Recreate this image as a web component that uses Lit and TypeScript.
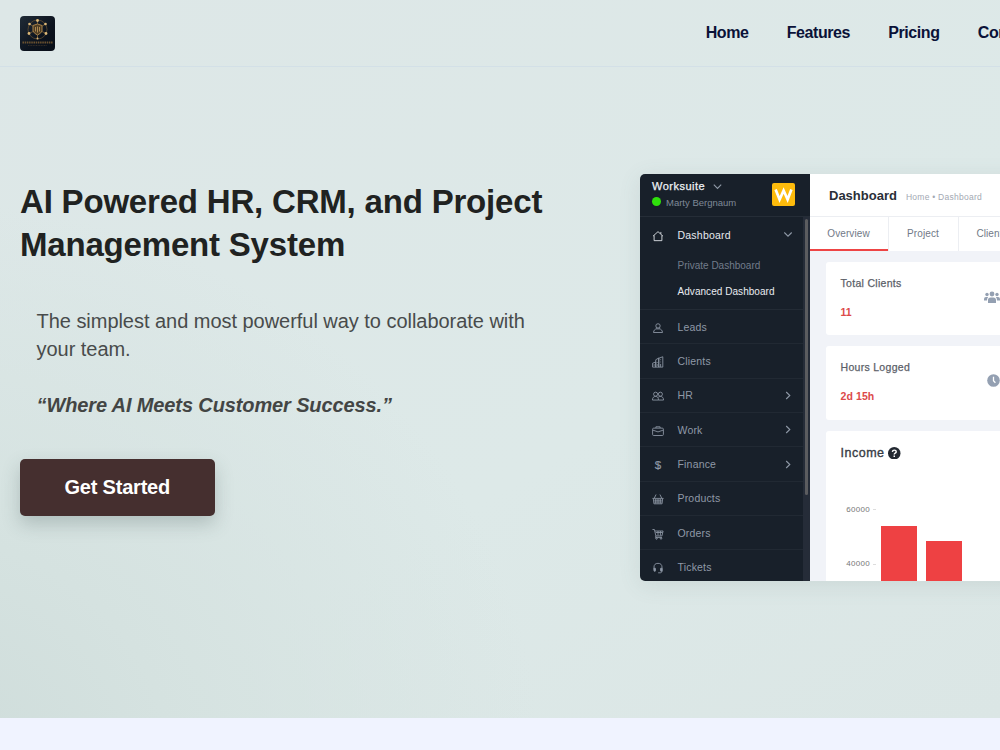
import { LitElement, html, css, svg } from "lit";
import { customElement } from "lit/decorators.js";

const menuIcons: Record<string, unknown> = {
  home: svg`<path d="M1.400 8.200 8 2.200l6.600 6M2.800 7.200v7h10.400v-7M11.800 2.600v2.600"/>`,
  leads: svg`<circle cx="8" cy="5.2" r="2.9"/><path d="M5.800 7.400 6.400 9M10.200 7.400 9.600 9M2 14c.2-3 2.200-4.800 4.200-4.800h3.600c2 0 4 1.800 4.200 4.800z"/>`,
  clients: svg`<path d="M.8 14.800V9.600L5 8v6.800M5 14.800V5l4-2.400v12.200M9 14.800V3l5.400-2v13.800H.8M2.800 11v2M11.500 4.500v1M11.500 7.500v1M11.500 10.500v4M7 8v1M7 11v2"/>`,
  hr: svg`<circle cx="4.800" cy="5.600" r="2.700"/><circle cx="11.200" cy="5.600" r="2.700"/><path d="M.6 13.400c0-3.400 1.800-4.800 4.200-4.800s3.800 1.400 3.800 4.800zM8.400 9.600c.8-.8 1.700-1 2.800-1 2.200 0 4.200 1.400 4.200 4.800H8.600"/>`,
  work: svg`<rect x=".8" y="4.200" width="14.400" height="9.800" rx="1.400"/><path d="M5.200 4V2.400h5.600V4M1 6.800l7 2.400 7-2.400"/>`,
  basket: svg`<path d="M.6 7.200h14.800M1.800 7.600l.8 6.800h10.800l.8-6.800M3 7 5.400 2M13 7l-2.400-5M3 9.600h10M3 12h10M5 8v6M8 8v6M11 8v6"/>`,
  cart: svg`<path d="M.6 2h2.600l2 8.600h8L14.800 4H3.800M5.200 10.600l-.6 2h8.800M5 6h9.200M8 4v6M11.200 4v6"/><circle cx="6" cy="14" r="1"/><circle cx="12" cy="14" r="1"/>`,
  headset: svg`<path d="M2.600 10V7.200a5.400 5.400 0 0 1 10.800 0V12c0 1.600-1.200 2.400-2.600 2.400H8.200"/><rect x="2.600" y="8" width="2" height="4.400" rx=".9" class="solid"/><rect x="11.400" y="8" width="2" height="4.400" rx=".9" class="solid"/>`,
};

const entries = [
  { icon: "leads", label: "Leads" },
  { icon: "clients", label: "Clients" },
  { icon: "hr", label: "HR", more: true },
  { icon: "work", label: "Work", more: true },
  { icon: "dollar", label: "Finance", more: true },
  { icon: "basket", label: "Products" },
  { icon: "cart", label: "Orders" },
  { icon: "headset", label: "Tickets" },
];

@customElement("suite-sidebar")
class SuiteSidebar extends LitElement {
  static styles = css`
    :host { display: grid; grid-template-columns: 163px 6.5px; grid-template-rows: 42.5px 1fr; flex: none; width: 169.5px; background: #18202a; color: #8f99a7; font: 10.5px/14px "Liberation Sans", Arial, sans-serif; }
    .brand { grid-column: 1 / 3; display: flex; justify-content: space-between; padding: 6px 14.5px 0 12px; border-bottom: 1px solid #252d37; box-sizing: border-box; }
    .name { display: flex; align-items: center; gap: 8px; color: #eef1f5; font-size: 11px; line-height: 13px; -webkit-text-stroke: .25px; letter-spacing: .5px; }
    .user { display: flex; align-items: center; gap: 5px; font-size: 9.5px; line-height: 19px; color: #7f8997; }
    .dot { width: 9px; height: 9px; border-radius: 50%; background: #2fe00c; margin-top: -3px; }
    .badge { width: 23px; height: 23px; margin-top: 3px; }
    .menu { display: flex; flex-direction: column; overflow: hidden; }
    .group { height: 93.5px; box-sizing: border-box; border-bottom: 1px solid #232b35; flex: none; }
    .row { display: flex; align-items: center; height: 34.35px; flex: none; box-sizing: border-box; border-bottom: 1px solid #212933; padding: 0 10.5px 0 12px; letter-spacing: .18px; }
    .head { border: 0; height: 36px; color: #e6eaef; letter-spacing: .22px; }
    .label { flex: 1; margin-left: 13.5px; }
    .sub { padding: 6px 0 6px 37.5px; font-size: 10px; color: #727c8a; }
    .on { color: #e9ecf1; letter-spacing: .05px; }
    .icon { width: 12px; height: 12px; fill: none; stroke: #8f99a7; stroke-width: 1.15; margin-top: 2px; flex: none; }
    .head .icon { stroke: #e6eaef; }
    .solid { fill: #8f99a7; }
    .dollar { width: 12px; text-align: center; font-size: 11.5px; -webkit-text-stroke: .2px; margin-top: 1px; }
    .chev { width: 9px; height: 9px; fill: none; stroke: #8f99a7; stroke-width: 1.1; flex: none; }
    .track { background: #252c38; }
    .thumb { width: 3px; height: 276px; margin: 2px 0 0 1.5px; background: #5b5c5f; border-radius: 2px; }
  `;
  render() {
    return html`
      <div class="brand">
        <div>
          <div class="name"><span>Worksuite</span><svg class="chev" viewBox="0 0 9 9"><path d="M.8 2.700 4.500 6.400 8.200 2.700"/></svg></div>
          <div class="user"><i class="dot"></i><span>Marty Bergnaum</span></div>
        </div>
        <svg class="badge" viewBox="0 0 23 23"><rect width="23" height="23" rx="2" fill="#fdbb0c"/><path d="M3.600 6.500 7.600 16.500l4-9 4 9 3.800-10" fill="none" stroke="#fff" stroke-width="2.700"/></svg>
      </div>
      <div class="menu">
        <div class="group">
          <div class="row head"><svg class="icon" viewBox="0 0 16 16">${menuIcons.home}</svg><span class="label">Dashboard</span><svg class="chev" viewBox="0 0 9 9"><path d="M.3 2.500 4 6.200 7.700 2.500"/></svg></div>
          <div class="sub">Private Dashboard</div>
          <div class="sub on">Advanced Dashboard</div>
        </div>
        ${entries.map((e) => html`<div class="row">
          ${e.icon === "dollar" ? html`<span class="dollar">$</span>` : html`<svg class="icon" viewBox="0 0 16 16">${menuIcons[e.icon]}</svg>`}
          <span class="label">${e.label}</span>
          ${e.more ? html`<svg class="chev" viewBox="0 0 9 9"><path d="M2.200 1 5.800 4.500 2.200 8"/></svg>` : ""}
        </div>`)}
      </div>
      <div class="track"><div class="thumb"></div></div>
    `;
  }
}

@customElement("suite-dashboard")
class SuiteDashboard extends LitElement {
  static styles = css`
    :host { display: flex; flex-direction: column; flex: 1; background: #f1f3f8; color: #5b6068; font: 10.5px/14px "Liberation Sans", Arial, sans-serif; }
    .top { display: flex; align-items: center; gap: 9px; flex: none; height: 43px; box-sizing: border-box; padding: 1px 0 0 19.5px; background: #fff; border-bottom: 1px solid #eceef2; }
    .title { font-weight: 700; font-size: 13px; color: #2a2f38; }
    .crumbs { font-size: 8.5px; letter-spacing: .26px; color: #a3a9b3; margin-top: 2px; }
    .tabs { display: flex; flex: none; height: 33.5px; background: #fff; color: #717987; font-size: 10px; letter-spacing: .1px; }
    .tab { display: flex; flex: none; align-items: center; justify-content: center; box-sizing: border-box; width: 70px; padding-top: 1px; border-right: 1px solid #eceef2; }
    .active { width: 79px; box-shadow: inset 0 -2px #ee4444; }
    .short { width: 63px; }
    .cards { display: flex; flex-direction: column; gap: 11px; padding: 11.5px 0 0 16.5px; }
    .card { display: flex; justify-content: space-between; flex: none; height: 73.3px; box-sizing: border-box; padding: 14px 16px 0 14.5px; background: #fff; border-radius: 3px 0 0 3px; width: 190px; }
    .name { -webkit-text-stroke: .25px; letter-spacing: .3px; }
    .value { margin-top: 15px; color: #dc4a4a; font-weight: 700; letter-spacing: .1px; }
    .people { width: 16px; height: 13px; margin-top: 15px; fill: #94a0b2; }
    .clock { width: 13px; height: 13px; margin-top: 14px; fill: #94a0b2; }
    .income { display: block; height: 160px; padding-top: 15.4px; }
    .caption { display: flex; align-items: center; gap: 3.5px; font-size: 12.5px; letter-spacing: .5px; color: #373c45; -webkit-text-stroke: .35px; }
    .help { width: 12.5px; height: 12.5px; }
    .chart { display: grid; grid-template-columns: 35.5px 82px; column-gap: 5px; margin-top: 43px; }
    .axis { font-size: 8px; letter-spacing: .3px; line-height: 14px; color: #777; }
    .tick { display: flex; align-items: center; gap: 3px; justify-content: flex-end; margin-bottom: 40.5px; }
    .mark { width: 3px; height: 1px; background: #ddd; }
    .bars { display: flex; align-items: flex-end; gap: 9px; height: 100px; margin-top: 7px; }
    .bar { width: 36px; background: #ee4143; }
  `;
  render() {
    return html`
      <div class="top"><span class="title">Dashboard</span><span class="crumbs">Home • Dashboard</span></div>
      <div class="tabs"><div class="tab active">Overview</div><div class="tab">Project</div><div class="tab short">Client</div></div>
      <div class="cards">
        <div class="card"><div><div class="name">Total Clients</div><div class="value">11</div></div>
          <svg class="people" viewBox="0 0 16 13"><circle cx="8" cy="3" r="2.400"/><circle cx="3" cy="3.500" r="1.700"/><circle cx="13" cy="3.500" r="1.700"/><path d="M4 12V9q0-2.600 2.600-2.600h2.800Q12 6.400 12 9v3zM0 9.500V8q0-2 2-2h2.200Q3 7.200 3 9.500zM16 9.500V8q0-2-2-2h-2.200Q13 7.200 13 9.500z"/></svg></div>
        <div class="card"><div><div class="name">Hours Logged</div><div class="value">2d 15h</div></div>
          <svg class="clock" viewBox="0 0 13 13"><circle cx="6.500" cy="6.500" r="6.300"/><path d="M6.500 2.800v3.900l1.900 2" fill="none" stroke="#fff" stroke-width="1.300"/></svg></div>
        <div class="card income">
          <div class="caption">Income<svg class="help" viewBox="0 0 12 12"><circle cx="6" cy="6" r="6" fill="#222831"/><path d="M4.200 4.700Q4.400 3 6.100 3q1.800 0 1.800 1.500 0 .8-1 1.300Q6 6.300 6 7.200M6 8.200v1.400" fill="none" stroke="#fff" stroke-width="1.400"/></svg></div>
          <div class="chart">
            <div class="axis"><div class="tick">60000<i class="mark"></i></div><div class="tick">40000<i class="mark"></i></div></div>
            <div class="bars">${[84, 69].map((h) => html`<div class="bar" style="height:${h}px"></div>`)}</div>
          </div>
        </div>
      </div>
    `;
  }
}

@customElement("app-root")
class AppRoot extends LitElement {
  static styles = css`
    :host { display: block; width: 100%; height: 750px; overflow: hidden; background: #f0f3ff; font-family: "Liberation Sans", Arial, sans-serif; }
    .page { height: 717.5px; overflow: hidden; background: radial-gradient(ellipse 620px 560px at -8% 106%, #cedcda 0%, #d5e2e0 40%, rgba(221, 232, 231, 0) 100%), linear-gradient(150deg, #dde7e7, #dde9e8 60%, #dbe6e5); }
    .header { display: flex; align-items: center; justify-content: space-between; height: 66.5px; box-sizing: border-box; border-bottom: 1px solid #d3e0e7; padding-left: 20px; }
    .logo { width: 35px; height: 35px; margin-top: 1px; }
    .nav { display: flex; gap: 38.3px; width: 294.3px; color: #0a1238; font-weight: 700; font-size: 16px; letter-spacing: -.43px; line-height: 18px; white-space: nowrap; }
    .hero { display: grid; grid-template-columns: 580px 560px; column-gap: 40px; padding: 107.5px 0 0 20px; }
    .title { margin: 5.5px 0 0; color: #202221; font-size: 33px; line-height: 43.6px; font-weight: 700; letter-spacing: -.19px; }
    .lead { margin: 40.3px 0 0 16.5px; color: #484b4b; font-size: 20px; line-height: 28px; letter-spacing: -.035px; }
    .quote { margin: 28px 0 0 16.5px; color: #434544; font-size: 20px; line-height: 28px; font-style: italic; font-weight: 700; letter-spacing: -.12px; }
    .cta { display: flex; align-items: center; justify-content: center; width: 194.5px; height: 57px; margin-top: 40px; border-radius: 5px; background: #452f2f; color: #fff; font-size: 20px; font-weight: 700; letter-spacing: -.2px; box-shadow: 0 8px 18px rgba(60, 80, 80, .25); }
    .shot { display: flex; height: 407px; overflow: hidden; border-radius: 5px; box-shadow: 0 4px 22px rgba(80, 110, 110, .12); }
  `;
  render() {
    return html`
      <div class="page">
        <header class="header">
          <svg class="logo" viewBox="0 0 35 35"><defs><linearGradient id="g" x1="0" y1="0" x2="1" y2="1"><stop offset="0" stop-color="#202b36"/><stop offset=".6" stop-color="#0c131e"/><stop offset="1" stop-color="#080e18"/></linearGradient></defs>
            <rect width="35" height="35" rx="4" fill="url(#g)"/>
            <g fill="none" stroke="#80633a" stroke-width=".8"><circle cx="17.500" cy="13.500" r="9.500" stroke="#5f4b30"/><path d="M17.500 4.500v4M25.500 8 21.500 10.500M9.500 8l4 2.500M9 17.500l4-2M26 17.500l-4-2M17.500 19v3.500"/></g>
            <path d="M13 9.500 17.500 8 22 9.500V15q-1 2.500-4.500 4-3.500-1.500-4.500-4z" fill="#4e3d24" stroke="#a8824a"/><path d="M15.500 11v4.500M17.500 10.500v6M19.500 11v4.500" stroke="#c29a5c" stroke-width=".8"/>
            <g fill="#dcb878"><circle cx="17.500" cy="4.500" r="1.400"/><circle cx="25.500" cy="8" r="1.300"/><circle cx="9.500" cy="8" r="1.300"/><circle cx="9" cy="17.500" r="1.400"/><circle cx="26" cy="17.500" r="1.400"/><circle cx="17.500" cy="22.500" r="1"/></g>
            <path d="M2.500 26.500h30" stroke="#6b5230" stroke-width="1.800" stroke-dasharray="1.500 .7"/><path d="M8 29.500h19" stroke="#3d3428" stroke-width=".8" stroke-dasharray="1 .6"/></svg>
          <nav class="nav"><span>Home</span><span>Features</span><span>Pricing</span><span>Contact</span></nav>
        </header>
        <main class="hero">
          <section>
            <h1 class="title">AI Powered HR, CRM, and Project<br>Management System</h1>
            <p class="lead">The simplest and most powerful way to collaborate with<br>your team.</p>
            <p class="quote">“Where AI Meets Customer Success.”</p>
            <a class="cta">Get Started</a>
          </section>
          <div class="shot"><suite-sidebar></suite-sidebar><suite-dashboard></suite-dashboard></div>
        </main>
      </div>
    `;
  }
}
